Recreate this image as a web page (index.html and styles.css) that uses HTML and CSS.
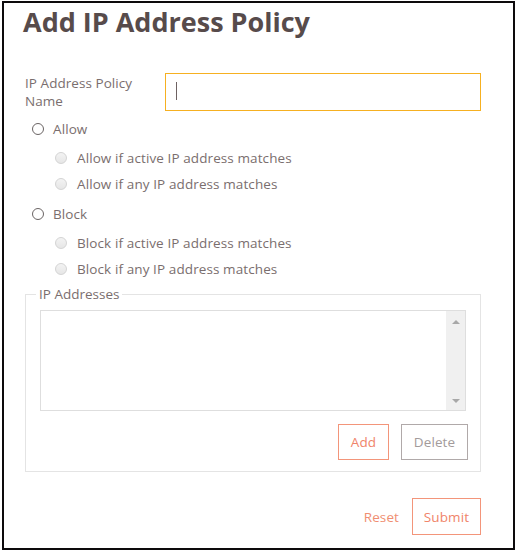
FILE: index.html
```html
<!DOCTYPE html>
<html>
<head>
<meta charset="utf-8">
<link rel="stylesheet" href="styles.css">
</head>
<body>
<div class="frame">
  <h1 class="title">Add IP Address Policy</h1>
  <div class="name-row">
    <label class="name-label">IP Address Policy Name</label>
    <div class="name-input"><span class="caret"></span></div>
  </div>
  <div class="radios">
    <div class="radio main"><span class="dot"></span><span>Allow</span></div>
    <div class="radio sub"><span class="dot"></span><span>Allow if active IP address matches</span></div>
    <div class="radio sub"><span class="dot"></span><span>Allow if any IP address matches</span></div>
    <div class="radio main"><span class="dot"></span><span>Block</span></div>
    <div class="radio sub"><span class="dot"></span><span>Block if active IP address matches</span></div>
    <div class="radio sub"><span class="dot"></span><span>Block if any IP address matches</span></div>
  </div>
  <fieldset class="ips">
    <legend>IP Addresses</legend>
    <div class="listbox">
      <div class="list-body"></div>
      <div class="scrollbar"><span class="arrow up"></span><span class="arrow down"></span></div>
    </div>
    <div class="ip-buttons">
      <button class="btn btn-orange add">Add</button>
      <button class="btn btn-gray delete">Delete</button>
    </div>
  </fieldset>
  <div class="footer">
    <button class="link">Reset</button>
    <button class="btn btn-orange submit">Submit</button>
  </div>
</div>
</body>
</html>
```
FILE: styles.css
```css
html, body {
  margin: 0;
  padding: 0;
  background: #fff;
}
body {
  font-family: "Open Sans", "Noto Sans", sans-serif;
  color: #7a6e6e;
}
.frame {
  box-sizing: border-box;
  margin: 1px 0 0 2px;
  width: 513px;
  height: 549px;
  border: 2px solid #0d0a0c;
  padding: 0 0 0 19px;
}
.title {
  margin: 0;
  padding-top: 2px;
  font-size: 27px;
  line-height: 34px;
  font-weight: 700;
  color: #574b4b;
  letter-spacing: 0;
}
.name-row {
  display: flex;
  align-items: flex-start;
  margin-top: 34px;
}
.name-label {
  width: 130px;
  padding: 1px 0 0 2px;
  font-size: 13.5px;
  line-height: 18px;
  letter-spacing: 0.05px;
}
.name-input {
  box-sizing: border-box;
  margin-left: 10px;
  width: 316px;
  height: 38px;
  border: 1px solid #f6b021;
  padding: 8px 0 0 10px;
}
.caret {
  display: block;
  width: 1px;
  height: 18px;
  background: #6e6262;
}
.radios {
  margin-top: 3px;
  display: flex;
  flex-direction: column;
}
.radio {
  display: flex;
  align-items: center;
  font-size: 13.5px;
  line-height: 18px;
  letter-spacing: 0.1px;
}
.radio .dot {
  box-sizing: border-box;
  width: 12px;
  height: 12px;
  border-radius: 50%;
  flex: none;
}
.radio.main {
  padding-left: 9px;
  height: 30px;
}
.radio.sub + .radio.main {
  margin-top: 2px;
}
.radio.main .dot {
  border: 1.5px solid #6a6464;
  margin-right: 9px;
}
.radio.sub {
  padding-left: 32px;
  height: 26px;
}
.radio.main + .radio.sub {
  margin-top: 1px;
}
.radio.sub .dot {
  border: 1px solid #d4d4d4;
  background: linear-gradient(#f3f3f3, #e6e6e6);
  margin-right: 10px;
}
.ips {
  box-sizing: border-box;
  margin: 4px 0 0 2px;
  width: 456px;
  padding: 8px 14px 11px 14px;
  border: 1px solid #e4e4e4;
}
.ips legend {
  padding: 0 3px;
  margin-left: -4px;
  font-size: 13.5px;
  line-height: 16px;
}
.listbox {
  box-sizing: border-box;
  display: flex;
  height: 101px;
  border: 1px solid #dedede;
}
.list-body {
  flex: 1;
}
.scrollbar {
  width: 19px;
  background: #f0f0f0;
  display: flex;
  flex-direction: column;
  justify-content: space-between;
  align-items: center;
  padding: 9px 0 7px;
}
.arrow {
  width: 0;
  height: 0;
  border-left: 4px solid transparent;
  border-right: 4px solid transparent;
}
.arrow.up {
  border-bottom: 4px solid #a8a8a8;
}
.arrow.down {
  border-top: 4px solid #a8a8a8;
}
.ip-buttons {
  display: flex;
  justify-content: flex-end;
  gap: 12px;
  margin-top: 13px;
  margin-right: -2px;
}
.btn {
  box-sizing: border-box;
  height: 36px;
  background: #fff;
  font-family: inherit;
  font-size: 13.5px;
  letter-spacing: 0.1px;
  padding: 0;
  cursor: pointer;
}
.btn-orange {
  border: 1px solid #f3957a;
  color: #f0846a;
}
.btn-gray {
  border: 1px solid #b0a9a9;
  color: #a39b9b;
}
.add {
  width: 51px;
}
.delete {
  width: 67px;
}
.footer {
  display: flex;
  justify-content: flex-end;
  align-items: center;
  gap: 13px;
  margin-top: 26px;
  padding-right: 32px;
}
.link {
  background: none;
  border: none;
  padding: 0;
  font-family: inherit;
  font-size: 13.5px;
  letter-spacing: 0.1px;
  color: #f08e72;
}
.submit {
  width: 69px;
  height: 37px;
}
```
